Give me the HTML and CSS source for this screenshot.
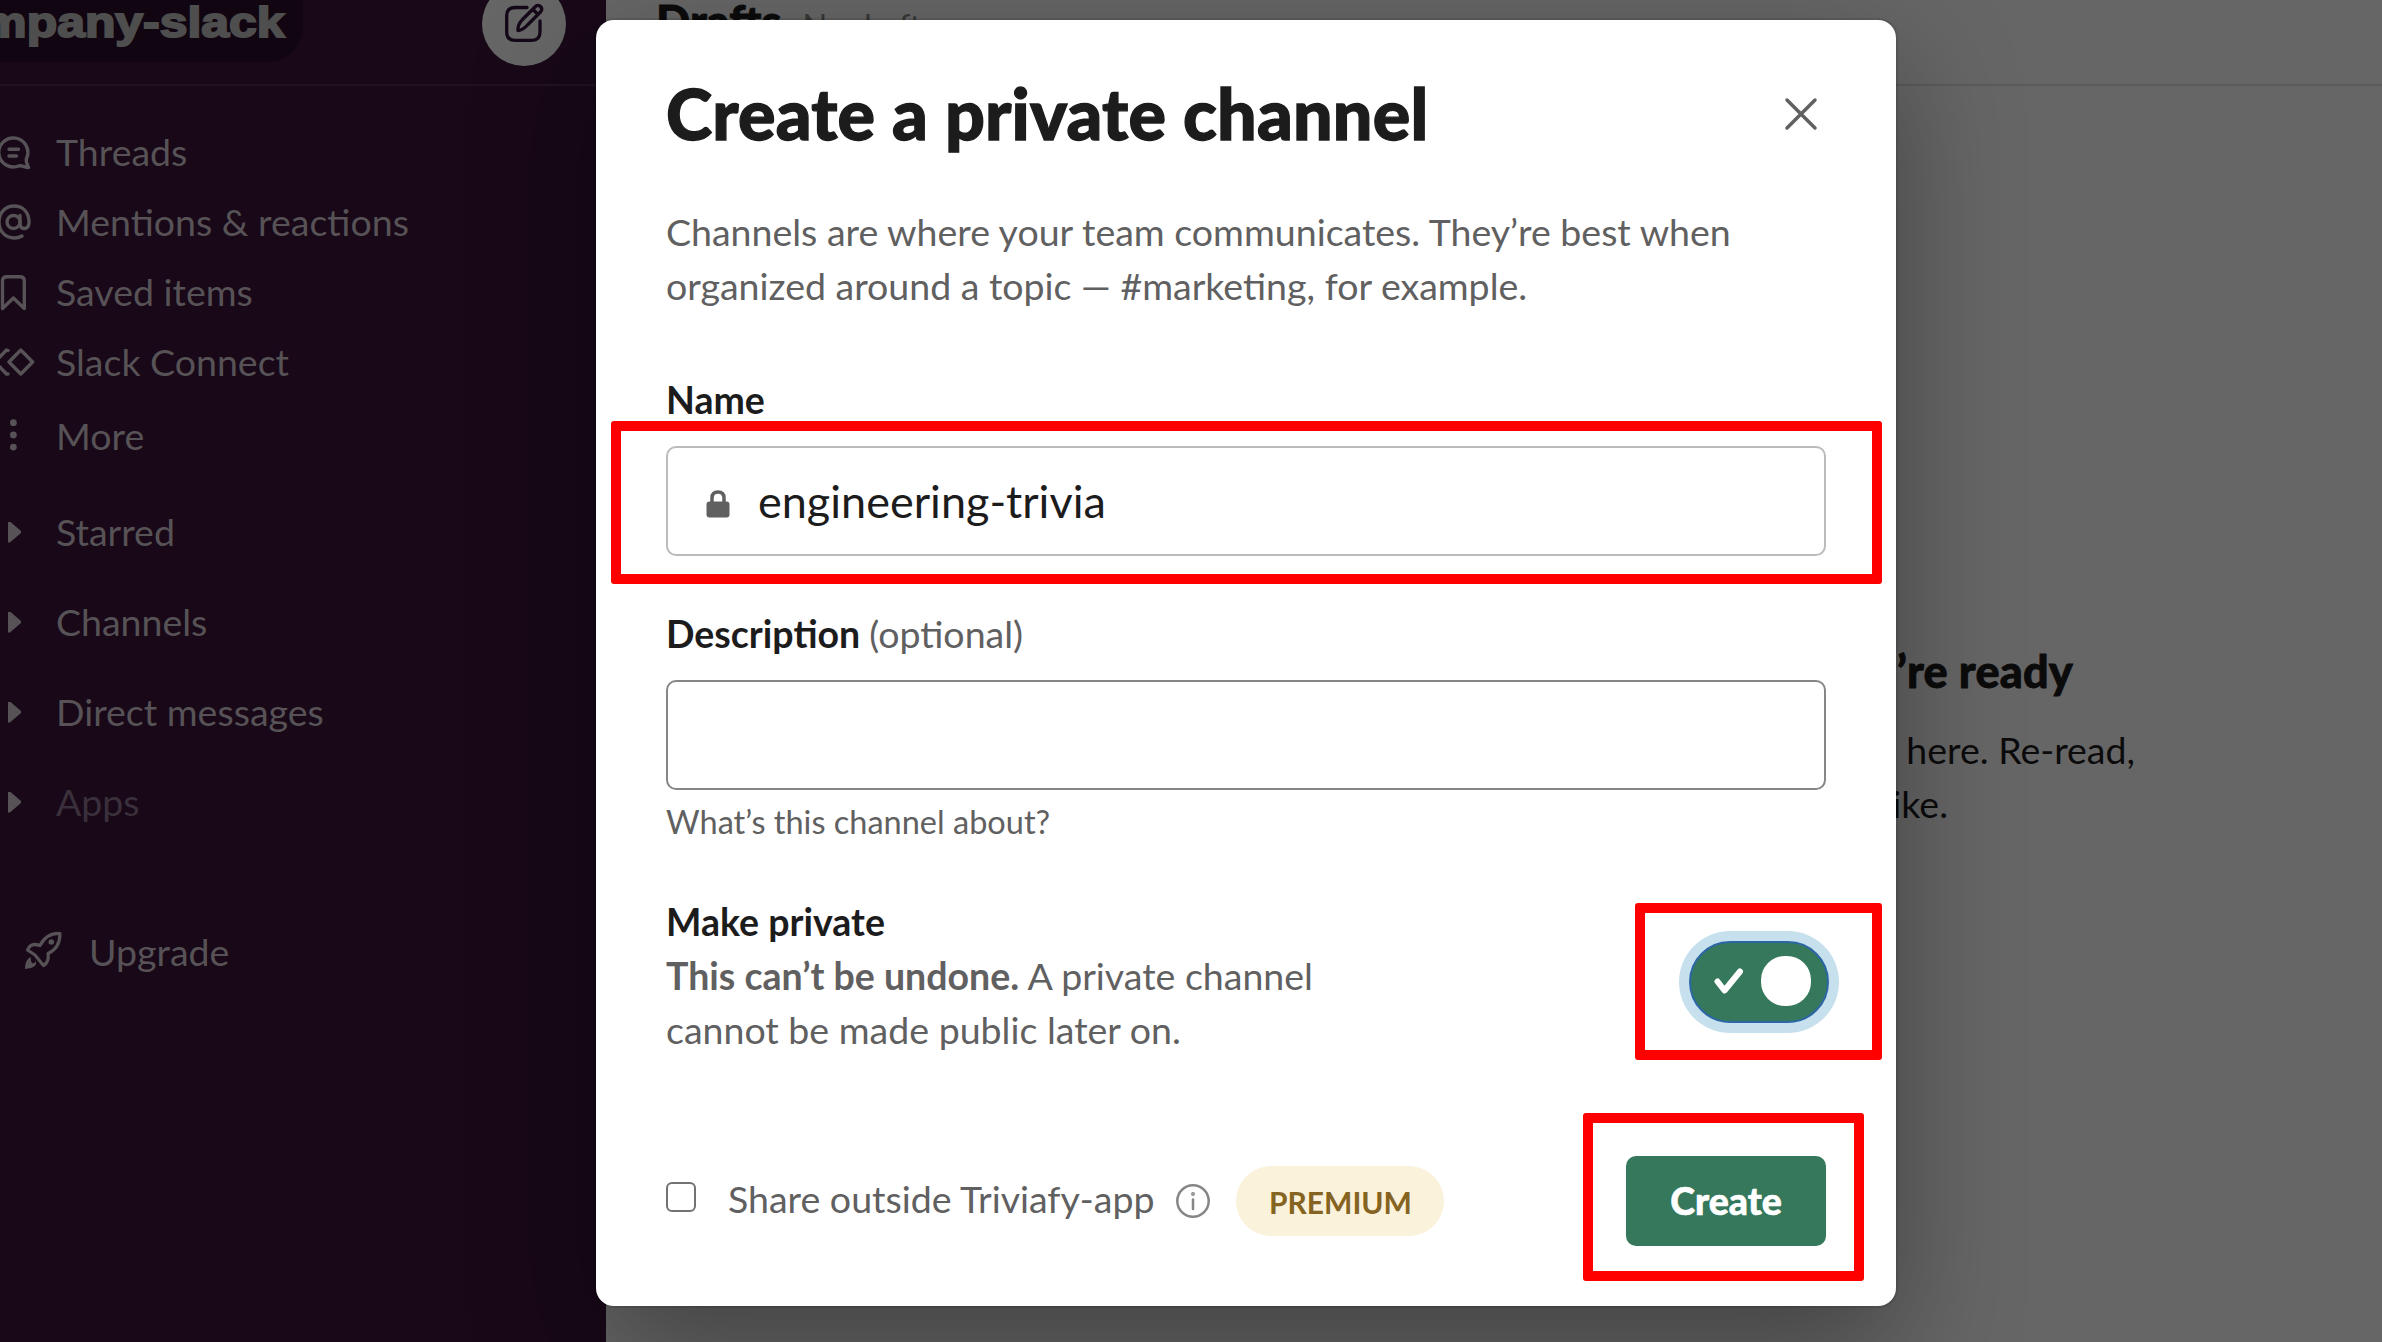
FILE: index.html
```
<!DOCTYPE html>
<html lang="en">
<head>
<meta charset="utf-8">
<title>Create a private channel</title>
<link rel="stylesheet" href="styles.css">
</head>
<body>
<div class="app">
  <aside class="sidebar">
    <header class="workspace">
      <div class="workspace-name"><span>mpany-slack</span></div>
      <span class="compose">
        <svg width="44" height="44" viewBox="0 0 44 44" fill="none" stroke="#150818" stroke-width="3.300" stroke-linecap="round" stroke-linejoin="round"><path d="M25 5.500H13Q4.700 5.500 4.700 13.500V30Q4.700 38.300 13 38.300H30Q38 38.300 38 30V19"/><path d="M16 28.500Q15.500 23 20 18L33 5Q36 2 38.500 4.500Q41 7 38.500 10L25.500 23Q21 28 16 28.500ZM31 7.500L36 12.500"/></svg>
      </span>
    </header>
    <nav class="nav">
      <div class="item"><svg class="icon" viewBox="0 0 36 40"><path d="M28.500 35.500C24.500 35.500 22.500 33 18.500 34A14.500 14.500 0 1 1 26.500 26.500C25.500 30 27 32 28.500 35.500Z"/><path d="M9 17.300H18.500M9 24H16.500"/></svg>Threads</div>
      <div class="item"><svg class="icon" viewBox="0 0 36 40"><circle cx="13.500" cy="20" r="6.500"/><path d="M20 13.500V22Q20.500 27 25 26.500Q29.500 25.500 29 18.500C28 9 22 4 14 4C5 4 -1 11 -1 20S5 36 14.500 36Q18.500 36 22 34"/></svg>Mentions &amp; reactions</div>
      <div class="item"><svg class="icon" viewBox="0 0 36 40"><path d="M2.500 36.500V9Q2.500 4.800 7 4.800H20Q24.300 4.800 24.300 9V36.500L13.400 26Z"/></svg>Saved items</div>
      <div class="item"><svg class="icon" viewBox="0 0 36 40"><path d="M8 8.500L6.500 8L-5 20L6.500 32L8 32M20.800 8L32.600 20L20.800 32L9 20Z"/></svg>Slack Connect</div>
      <div class="item more"><svg class="icon" viewBox="0 0 36 40"><g fill="#575256" stroke="none"><circle cx="13.400" cy="6.700" r="3.400"/><circle cx="13.400" cy="18.900" r="3.400"/><circle cx="13.400" cy="31.100" r="3.400"/></g></svg>More</div>
    </nav>
    <nav class="sections">
      <div class="item"><i class="caret"></i>Starred</div>
      <div class="item"><i class="caret"></i>Channels</div>
      <div class="item"><i class="caret"></i>Direct messages</div>
      <div class="item faint"><i class="caret"></i>Apps</div>
    </nav>
    <div class="item upgrade"><svg class="rocket" width="40" height="40" viewBox="0 0 40 40"><path d="M36 2.500C27 2 20 7 16 14.500C9 12 5.500 14 3.500 19L11 24L19.500 34.500Q25.500 31 24 22.500C32 19 36 12 36 2.500Z"/><circle class="solid" cx="27.300" cy="11" r="2.800"/><path class="solid" d="M1 38C1.200 33 2 28 7 26.300Q6 31 9 32.500Q11 32 11.500 30Q14.500 36.500 1 38Z"/></svg>Upgrade</div>
  </aside>
  <main class="content">
    <header class="topbar"><b>Drafts</b><span>No drafts</span></header>
    <section class="empty">
      <h2>’re ready</h2>
      <p class="line-one">here. Re-read,</p>
      <p class="line-two">like.</p>
    </section>
  </main>
</div>

<div class="modal">
  <header class="modal-head">
    <h1>Create a private channel</h1>
    <svg class="close" width="34" height="34" viewBox="0 0 34 34"><path d="M3 3L31 31M31 3L3 31"/></svg>
  </header>
  <p class="intro">Channels are where your team communicates. They’re best when organized around a topic — #marketing, for example.</p>
  <label class="label">Name</label>
  <div class="field name-field">
    <svg class="lock" width="24" height="28" viewBox="0 0 24 28"><path d="M6 13V8Q6 2 12 2T18 8V13" fill="none" stroke="#616061" stroke-width="3.500"/><rect x="0.500" y="11.500" width="23" height="16" rx="3" fill="#616061"/></svg>
    <span>engineering-trivia</span>
    <i class="mark mark-name"></i>
  </div>
  <label class="label desc-label">Description <span>(optional)</span></label>
  <div class="field desc-field"></div>
  <p class="hint">What’s this channel about?</p>
  <div class="private">
    <div class="private-text">
      <b>Make private</b>
      <p><strong>This can’t be undone.</strong> A private channel cannot be made public later on.</p>
    </div>
    <div class="toggle">
      <svg width="32" height="28" viewBox="0 0 32 28"><path d="M4.500 14.500L11.500 23.500L27 4.500"/></svg>
      <span class="knob"></span>
      <i class="mark mark-toggle"></i>
    </div>
  </div>
  <footer class="modal-foot">
    <span class="checkbox"></span>
    <span class="share">Share outside Triviafy-app</span>
    <svg class="info" width="34" height="34" viewBox="0 0 34 34"><circle cx="17" cy="17" r="15.700"/><path d="M17 15.500V25"/><circle cx="17" cy="10" r="0.700"/></svg>
    <span class="premium">PREMIUM</span>
    <button class="create">Create<i class="mark mark-create"></i></button>
  </footer>
</div>
</body>
</html>
```
FILE: styles.css
```
* { box-sizing: border-box; }
body { margin: 0; width: 2382px; height: 1342px; overflow: hidden; background: #666; font: 37.5px/54px Lato, sans-serif; color: #1d1c1d; }
h1, h2, p { margin: 0; }
svg { display: block; flex: none; overflow: visible; }

.app { display: flex; height: 1342px; overflow: hidden; }
.sidebar { width: 606px; flex: none; background: #180818; color: #575256; overflow: hidden; }
.workspace { height: 86px; display: flex; justify-content: space-between; align-items: flex-start; border-bottom: 2px solid #211222; padding-right: 40px; }
.workspace-name { width: 303px; height: 62px; padding-right: 18px; border-radius: 0 0 36px 0; background: #110511; color: #4e4e4e; font: bold 43px/44px "Liberation Sans", Arial, sans-serif; -webkit-text-stroke: 2px #4e4e4e; display: flex; justify-content: flex-end; }
.workspace-name span { transform: scaleX(1.16); transform-origin: right; }
.compose { width: 84px; height: 84px; margin-top: -18px; border-radius: 50%; background: #666; display: flex; align-items: center; justify-content: center; }
.nav { padding-top: 31px; }
.item { height: 70px; display: flex; align-items: center; line-height: 54px; white-space: nowrap; }
.item.more { height: 78px; }
.icon { width: 36px; height: 40px; margin-right: 20px; fill: none; stroke: #575256; stroke-width: 3.4; stroke-linecap: round; stroke-linejoin: round; }
.sections { padding-top: 12px; }
.sections .item { height: 90px; }
.faint { color: #3a303b; }
.caret { width: 13px; height: 21px; margin: 0 35px 0 8px; background: #575256; clip-path: polygon(0 0, 15% 0, 100% 45%, 100% 55%, 15% 100%, 0 100%); }
.upgrade { margin-top: 60px; height: 90px; padding-left: 24px; }
.rocket { margin: -2px 25px 0 0; fill: none; stroke: #575256; stroke-width: 3.2; stroke-linejoin: round; }
.solid { fill: #575256; stroke: none; }

.content { flex: 1; background: #666; }
.topbar { height: 86px; padding-left: 50px; border-bottom: 2px solid #5b5b5b; display: flex; align-items: baseline; gap: 21px; line-height: 42px; color: #383838; }
.topbar b { font-size: 45px; font-weight: 900; color: #0c0b0c; -webkit-text-stroke: .8px; }
.topbar span { font-size: 32.5px; }
.empty { width: 1529px; padding-top: 553px; color: #0c0b0c; }
.empty h2 { width: 1467px; font-size: 45px; line-height: 64px; font-weight: 900; text-align: right; letter-spacing: .2px; -webkit-text-stroke: .8px; }
.empty p { text-align: right; }
.line-one { padding-top: 20px; }
.line-two { width: 1342px; }

.modal { position: absolute; left: 596px; top: 20px; width: 1300px; height: 1286px; padding: 0 70px; background: #fff; border-radius: 18px; box-shadow: 0 0 0 2px rgba(0,0,0,.1), 0 45px 120px rgba(0,0,0,.35); }
.modal-head { display: flex; justify-content: space-between; align-items: center; height: 185px; padding-bottom: 1px; }
h1 { font-size: 70px; line-height: 88px; font-weight: 900; letter-spacing: .19px; -webkit-text-stroke: 1.3px; margin-top: 2px; }
.close { margin: 3px 8px 0 0; stroke: #616061; stroke-width: 3.5; stroke-linecap: round; }
.intro { color: #616061; height: 168px; }
.label { display: block; font-weight: 700; height: 73px; }
.label span { font-weight: 400; color: #616061; }
.field { position: relative; height: 110px; border: 2px solid #bbb; border-radius: 10px; display: flex; align-items: center; padding-left: 38px; gap: 28px; font-size: 45px; }
.lock { margin-top: 5px; }
.desc-label { margin-top: 51px; }
.desc-field { border-color: #868686; }
.hint { font-size: 32.5px; line-height: 64px; color: #616061; height: 105px; }
.private { display: flex; justify-content: space-between; align-items: flex-start; }
.private-text { width: 700px; }
.private-text b { display: block; }
.private-text p { color: #616061; }
.toggle { position: relative; width: 140px; height: 82px; margin: 46px -3px 0 0; border: 2.5px solid #2c66a5; border-radius: 41px; background: #35785b; box-shadow: 0 0 0 10px #c7e0ee; display: flex; align-items: center; justify-content: space-between; padding: 0 16px 2px 22px; }
.toggle svg { fill: none; stroke: #fff; stroke-width: 6; stroke-linecap: round; stroke-linejoin: round; }
.knob { width: 50px; height: 50px; border-radius: 24px; background: #fff; }
.modal-foot { display: flex; align-items: center; height: 90px; margin-top: 99px; }
.checkbox { width: 30px; height: 30px; border: 2.5px solid #737273; border-radius: 6px; margin: -8px 32px 0 0; }
.share { color: #616061; line-height: 54px; margin-top: -5px; }
.info { margin-left: 22px; fill: none; stroke: #868686; stroke-width: 2.5; stroke-linecap: round; }
.premium { width: 208px; height: 70px; margin-left: 26px; border-radius: 35px; background: #faf2db; color: #856321; font-size: 30px; font-weight: 700; line-height: 72px; text-align: center; }
.create { position: relative; width: 200px; height: 90px; margin-left: auto; padding: 0; border: 0; border-radius: 10px; background: #35785b; color: #fff; font: 900 37.5px/88px Lato, sans-serif; -webkit-text-stroke: .6px; }

/* Highlight frames over the controls */
.mark { position: absolute; border: 10px solid #f00; border-radius: 3px; }
.mark-name { left: -57px; top: -27px; width: 1271px; height: 163px; }
.mark-toggle { left: -56px; top: -40px; width: 247px; height: 157px; }
.mark-create { left: -43px; top: -43px; width: 281px; height: 168px; }
```
